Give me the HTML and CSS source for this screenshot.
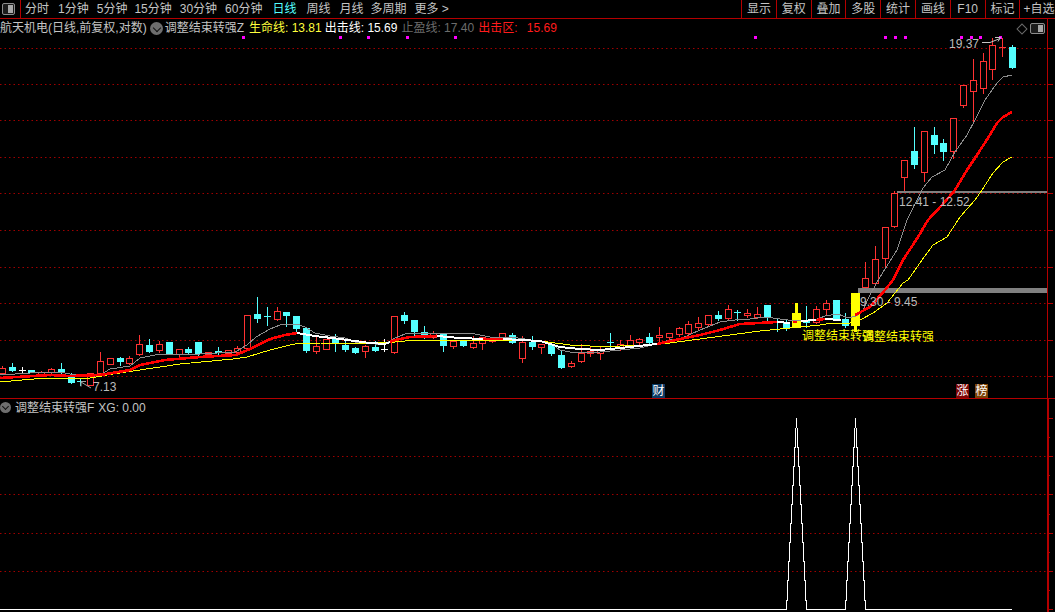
FILE: index.html
```html
<!DOCTYPE html>
<html lang="zh">
<head>
<meta charset="utf-8">
<title>航天机电</title>
<link rel="stylesheet" href="styles.css">
</head>
<body>
<div class="app">
  <header class="toolbar">
    <div class="toggle-cell"><span class="panel-icon"><i></i></span></div>
    <nav class="periods">
      <span>分时</span><span class="plus">1分钟</span><span>5分钟</span><span class="tight">15分钟</span><span>30分钟</span><span>60分钟</span>
      <span class="active wide">日线</span><span class="wide">周线</span><span class="plus">月线</span><span class="tight">多周期</span><span>更多 &gt;</span>
    </nav>
    <div class="tools">
      <span>显示</span><span>复权</span><span>叠加</span><span>多股</span><span>统计</span><span>画线</span><span>F10</span><span>标记</span><span class="edge">+自选</span>
    </div>
  </header>

  <section class="panel main-panel">
    <svg class="plot" id="mainPlot" viewBox="0 19 1055 379" width="1055" height="379">
      <g class="labels">
        <text class="lbl" x="949" y="48">19.37</text>
        <text class="lbl" x="899" y="206">12.41 - 12.52</text>
        <text class="lbl" x="860" y="306">9.30 - 9.45</text>
        <text class="lbl" x="93" y="391">7.13</text>
      </g>
    </svg>
    <div class="legend">
      <span class="lg-title">航天机电(日线,前复权,对数)</span>
      <span class="chevron"></span>
      <span class="lg-title">调整结束转强Z</span>
      <span class="yellow">生命线: 13.81</span>
      <span class="white">出击线: 15.69</span>
      <span class="dim">止盈线: 17.40</span>
      <span class="red">出击区: 15.69</span>
    </div>
    <div class="corner">
      <span class="diamond"></span>
      <span class="panel-icon"><i></i></span>
    </div>
    <span class="signal first">调整结束转强</span>
    <span class="signal second">调整结束转强</span>
    <span class="badge cai">财</span>
    <span class="badge zhang">涨</span>
    <span class="badge bang">榜</span>
  </section>

  <section class="panel sub-panel">
    <svg class="plot" id="subPlot" viewBox="0 399 1055 213" width="1055" height="213"></svg>
    <div class="legend sub-legend">
      <span class="chevron"></span>
      <span class="lg-title">调整结束转强F</span>
      <span class="lg-title">XG: 0.00</span>
    </div>
  </section>
</div>
<script src="chart.js"></script>
</body>
</html>
```
FILE: styles.css
```css
* { box-sizing: border-box; }
html, body { margin: 0; height: 100%; background: #000; overflow: hidden; }
body { font: 12px/1 "Liberation Sans", "Noto Sans CJK SC", sans-serif; color: #c4c4c4; }
.app { width: 1055px; height: 612px; display: flex; flex-direction: column; }

.toolbar { flex: none; height: 19px; display: flex; border-bottom: 1px solid #b40000; align-items: stretch; }
.toggle-cell { width: 21px; border-right: 1px solid #b40000; display: flex; align-items: center; padding-left: 2px; }
.panel-icon { display: block; width: 13px; height: 12px; border: 1px solid #8c8c8c; border-radius: 2px; background: #1c1c1c; padding: 1px; display: flex; justify-content: flex-end; }
.panel-icon i { display: block; width: 5px; background: #a8a8a8; }
.periods { flex: 1; display: flex; align-items: center; padding-left: 4px; gap: 8px; white-space: nowrap; }
.periods .tight { margin-left: -1px; }
.periods .plus { margin-left: 1px; }
.periods .wide { margin-left: 2px; }
.periods .active { color: #54ffff; }
.tools { flex: none; display: flex; width: 314px; overflow: hidden; }
.tools span { flex: none; width: 34.8px; border-left: 1px solid #b40000; display: flex; align-items: center; justify-content: center; white-space: nowrap; }
.tools .edge { justify-content: flex-start; padding-left: 3px; }

.panel { position: relative; flex: none; }
.main-panel { height: 380px; border-bottom: 1px solid #b40000; }
.sub-panel { flex: 1; }
.plot { display: block; }

.legend { position: absolute; left: 0; top: 0; height: 18px; display: flex; align-items: center; white-space: nowrap; gap: 4px; }
.lg-title { color: #c4c4c4; }
.chevron { width: 13px; height: 13px; border-radius: 50%; background: #6e6e6e; position: relative; margin: 0 -2px 0 -1px; }
.chevron::after { content: ""; position: absolute; left: 4px; top: 3px; width: 5px; height: 5px; border-right: 1px solid #111; border-bottom: 1px solid #111; transform: rotate(45deg); }
.yellow { color: #ffff3c; margin-left: 1px; }
.white { color: #fff; margin-left: -1px; }
.dim { color: #6c6c6c; }
.red { color: #ff1c1c; word-spacing: 6px; }

.sub-legend { top: 0; height: 17px; gap: 4px; }
.sub-legend .chevron { width: 11px; height: 11px; margin: 0; }
.sub-legend .chevron::after { left: 3px; top: 2px; width: 4px; height: 4px; }

.corner { position: absolute; left: 1017px; top: 4px; display: flex; align-items: center; gap: 3px; }
.diamond { width: 8px; height: 8px; margin: 0 1px; border: 1px solid #6a6a6a; transform: rotate(45deg); }
.corner .panel-icon { width: 15px; height: 11px; }

.signal { position: absolute; top: 311px; color: #ffff00; white-space: nowrap; }
.signal.first { left: 802px; }
.signal.second { left: 862px; top: 312px; }

.badge { position: absolute; top: 365px; width: 13px; height: 14px; display: flex; align-items: center; justify-content: center; color: #fff; font-size: 12px; }
.badge.cai { left: 652px; background: #0c3a64; }
.badge.zhang { left: 956px; background: #7c0606; }
.badge.bang { left: 975px; background: #7a4208; }

.lbl { font: 12px "Liberation Sans", sans-serif; fill: #bcbcbc; }
```
FILE: chart.js
```js
var NS = 'http://www.w3.org/2000/svg';
var RED = '#ff3232', CYAN = '#54ffff', GRID = '#a00000', AXIS = '#b40000';

function el(parent, name, attrs) {
  var n = document.createElementNS(NS, name);
  for (var k in attrs) n.setAttribute(k, attrs[k]);
  parent.appendChild(n);
  return n;
}
function hline(g, x1, x2, y, color, extra) {
  var a = { x1: x1, x2: x2, y1: y + 0.5, y2: y + 0.5, stroke: color };
  for (var k in extra) a[k] = extra[k];
  el(g, 'line', a);
}
function vline(g, x, y1, y2, color, w) {
  el(g, 'line', { x1: x + 0.5, x2: x + 0.5, y1: y1, y2: y2, stroke: color, 'stroke-width': w || 1 });
}
function pts(list) { return list.map(function (p) { return p.join(','); }).join(' '); }

/* type, bodyTop, bodyBottom, high, low */
var candles = [
  ['r',368,373,366,374],['c',367,370,363,371],['w',370,370,367,373],['c',370,372],['r',372,374,371,375],
  ['r',369,372,368,373],['c',369,372,363,376],['c',375,382,373,383],['x',381,381,378,385],['r',373,385],
  ['r',361,373,352,375],['r',358,364],['c',358,361,357,365],['r',358,363,356,364],['r',344,354,335,355],
  ['c',345,351,339,352],['r',344,350,341,352],['c',342,354],['r',349,354,349,356],['c',349,352,347,353],
  ['c',342,353,342,356],['r',352,354,352,356],['c',351,352,347,354],['r',350,353],['r',348,352,346,353],
  ['r',315,348,315,350],['c',314,318,297,322],['x',316,316,307,325],['r',311,319,307,320],['c',312,315,312,326],
  ['c',316,328,316,333],['c',328,350,328,352],['r',346,351,337,353],['r',339,349],['c',339,343,334,351],
  ['c',345,349,340,351],['c',348,352,347,353],['r',346,351,345,357],['c',347,350,341,351],['w',349,349,339,351],
  ['r',316,352,316,353],['c',315,320,312,323],['c',320,331,320,335],['c',332,337,326,338],['r',333,337,331,338],
  ['c',334,345,333,351],['r',341,346,341,348],['c',340,345,340,346],['r',343,347,336,348],['r',337,343,337,349],
  ['r',338,341,337,342],['r',333,338,333,339],['c',335,342,333,343],['r',342,358,336,362],['c',342,346,336,349],
  ['r',344,347,344,353],['c',345,353,343,355],['c',355,367,350,368],['r',363,366,361,367],['r',353,361,344,362],
  ['r',351,353,347,356],['r',350,353,347,359],['x',342,342,333,348],['r',344,348,340,350],['r',340,345,335,347],
  ['r',339,342,338,345],['c',337,342,333,343],['r',335,337,327,341],['r',333,337,333,342],['r',328,334,327,336],
  ['r',324,333,321,335],['r',323,327,317,329],['r',315,324,315,326],['c',315,318,311,320],['r',309,318,305,319],
  ['x',312,312,310,320],['r',313,315,309,317],['r',314,317,307,318],['c',305,317,305,320],['x',321,321,319,331],
  ['c',323,328,319,330],['y',313,328,303,328],['c',320,322,306,327],['r',309,322,306,323],['r',303,309,300,315],
  ['c',300,318,300,320],['c',319,325,313,327],['y',293,326,293,332],['r',278,287,262,289],['r',259,283,246,285],
  ['r',227,258,227,267],['r',193,226,191,227],['r',160,177,160,190],['c',151,164,127,168],['r',131,172,131,181],
  ['c',135,144,127,153],['c',143,151,139,160],['r',118,151,118,158],['r',85,105,85,107],['r',80,91,59,122],
  ['r',61,88,53,93],['r',45,69,38,79],['x2',47,47,38,56],['c',47,67,45,68]
];

var gray = [[0,375],[30,373],[60,372],[70,374],[90,377],[100,375],[110,369],[130,366],[140,358],[160,354],[200,354],[235,352],[247,345],[256,337],[270,329],[280,325],[297,324],[305,327],[315,333],[330,336],[345,338],[355,342],[375,344],[385,344],[395,338],[405,334],[430,333],[445,334],[470,333],[490,337],[510,337],[525,339],[550,343],[560,350],[570,352],[585,353],[600,352],[620,350],[640,348],[655,344],[670,340],[680,339],[700,330],[720,322],[735,320],[750,319],[765,317],[780,319],[795,321],[805,320],[815,320],[825,316],[838,314],[848,318],[856,316],[862,312],[870,295],[880,277],[897,250],[907,220],[923,188],[932,177],[945,170],[955,152],[967,135],[975,120],[985,100],[997,83],[1003,77],[1012,75]];

var yellow = [[0,382],[45,378],[90,378],[113,374],[133,371],[160,367],[180,364],[233,359],[247,357],[270,350],[290,345],[300,343],[320,343],[360,344],[395,342],[415,340],[470,340],[520,340],[540,341],[570,345],[590,346],[620,346],[650,345],[670,343],[700,339],[730,335],[760,331],[790,328],[800,327],[820,325],[833,323],[850,323],[860,320],[873,313],[887,303],[903,283],[908,280],[922,260],[933,245],[947,237],[960,217],[975,200],[982,190],[993,173],[1003,162],[1012,157]];

/* Thick line: red while rising, white while falling. */
var thick = [
  ['red',[[0,378],[50,375],[70,376],[100,375],[130,370],[140,365],[165,360],[200,357],[236,355],[250,349],[270,339],[285,335],[297,333]]],
  ['#fff',[[297,333],[315,336],[340,339],[370,343],[385,344],[390,342]]],
  ['red',[[390,342],[395,340],[410,337],[437,336]]],
  ['#fff',[[437,336],[460,338],[483,339]]],
  ['red',[[483,339],[503,339]]],
  ['#fff',[[503,339],[540,341],[560,347],[580,349],[600,350],[630,347],[657,344]]],
  ['red',[[657,344],[680,339],[700,335],[720,330],[740,324],[777,322]]],
  ['#fff',[[777,322],[790,323]]],
  ['red',[[793,322],[797,322]]],
  ['#fff',[[801,321],[816,320]]],
  ['red',[[816,320],[825,319]]],
  ['#fff',[[825,319],[841,320]]],
  ['red',[[855,315],[870,307],[885,290],[893,280],[903,260],[918,237],[928,220],[942,205],[955,190],[967,170],[977,155],[988,138],[997,123],[1003,117],[1012,112]]]
];

function drawCandle(g, d, i) {
  var c = Math.round(2 + 9.806 * i), t = d[0], top = d[1], bot = d[2];
  var hi = d[3] === undefined ? top : d[3], lo = d[4] === undefined ? bot : d[4];
  if (t === 'y') {
    el(g, 'rect', { x: c - 1, y: hi, width: 3, height: lo - hi, fill: '#ffff00' });
    el(g, 'rect', { x: c - 4, y: top, width: 9, height: bot - top, fill: '#ffff00' });
    return;
  }
  var color = t === 'r' || t === 'x2' ? RED : t === 'c' || t === 'x' ? CYAN : '#fff';
  vline(g, c, hi, lo + 1, color);
  if (t === 'r') {
    el(g, 'rect', { x: c - 2.5, y: top + 0.5, width: 6, height: bot - top, fill: '#000', stroke: RED });
  } else if (t === 'c') {
    el(g, 'rect', { x: c - 3, y: top, width: 7, height: bot - top + 1, fill: CYAN });
  } else {
    hline(g, c - 3, c + 4, top, color);
  }
}

function drawGrid(g, rows, right) {
  rows.forEach(function (y) {
    hline(g, 0, right, y, GRID, { 'stroke-dasharray': '1.5 3' });
  });
}

/* main panel */
(function () {
  var svg = document.getElementById('mainPlot');
  var labels = svg.querySelector('.labels');
  var g = el(svg, 'g', {});
  svg.insertBefore(g, labels);

  var rows = [48, 84, 120, 157, 193, 230, 267, 303, 340, 376];
  drawGrid(g, rows, 1047);
  rows.forEach(function (y) { hline(g, 1047, 1053, y, AXIS); });
  vline(g, 1047, 19, 398, AXIS);

  var cg = el(g, 'g', { 'shape-rendering': 'crispEdges' });
  candles.forEach(function (d, i) { drawCandle(cg, d, i); });

  el(cg, 'rect', { x: 858, y: 288, width: 189, height: 5, fill: '#808080' });
  el(cg, 'rect', { x: 897, y: 191, width: 150, height: 2, fill: '#808080' });

  el(cg, 'polyline', { points: pts(gray), fill: 'none', stroke: '#8c8c8c', 'stroke-width': 1 });
  el(cg, 'polyline', { points: pts(yellow), fill: 'none', stroke: '#ffff00', 'stroke-width': 1 });
  thick.forEach(function (s) {
    el(cg, 'polyline', { points: pts(s[1]), fill: 'none', stroke: s[0], 'stroke-width': s[0] === 'red' ? 2.6 : 2 });
  });

  [243, 340, 368, 407, 455, 755, 885, 895, 905, 961, 971, 980, 1000].forEach(function (x) {
    el(cg, 'rect', { x: x - 1, y: 36, width: 3, height: 3, fill: '#ff00ff' });
  });

  /* price arrows */
  el(g, 'path', { d: 'M982 42.5H990L1000 38.5M995 37.5H1000.5L998 41.5', fill: 'none', stroke: '#c4c4c4' });
  el(g, 'path', { d: 'M91 388L81 382M81 386.5V381.5H86', fill: 'none', stroke: '#a0a0a0' });
})();

/* lower panel */
(function () {
  var svg = document.getElementById('subPlot');
  var g = el(svg, 'g', {});
  drawGrid(g, [456, 494, 533, 571], 1047);
  [418, 456, 494, 533, 571, 609].forEach(function (y) { hline(g, 1047, 1053, y, AXIS); });
  [437, 475, 514, 552, 590].forEach(function (y) { hline(g, 1047, 1050, y, AXIS); });
  el(g, 'rect', { x: 1047, y: 399, width: 2, height: 213, fill: AXIS, 'shape-rendering': 'crispEdges' });

  /* Stepped triangles: each x pixel holds for about 19px of height. */
  function peak(cx) {
    var p = [], k;
    for (k = 10; k >= 1; k--) {
      p.push([cx - k + 0.5, k === 10 ? 609.5 : 600 - (9 - k) * 19.1]);
      p.push([cx - k + 0.5, 600 - (10 - k) * 19.1]);
    }
    p.push([cx + 0.5, 428], [cx + 0.5, 418], [cx + 0.5, 428]);
    for (k = 1; k <= 10; k++) {
      p.push([cx + k + 0.5, 600 - (10 - k) * 19.1]);
      p.push([cx + k + 0.5, k === 10 ? 609.5 : 600 - (9 - k) * 19.1]);
    }
    return p;
  }
  var path = [[0, 609.5]].concat(peak(796)).concat(peak(855)).concat([[1012, 609.5]]);
  el(g, 'polyline', { points: pts(path), fill: 'none', stroke: '#fff', 'shape-rendering': 'crispEdges' });
})();
```
